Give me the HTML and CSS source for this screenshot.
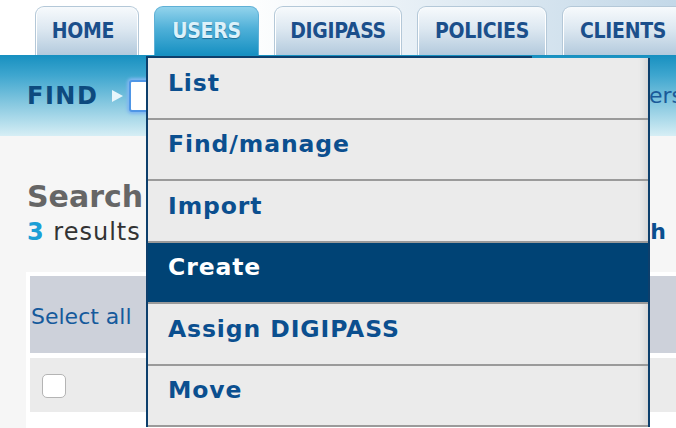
FILE: index.html
```html
<!DOCTYPE html>
<html>
<head>
<meta charset="utf-8">
<link rel="stylesheet" href="styles.css">
</head>
<body>
<div class="page">
  <nav class="tabs">
    <a class="tab tab-home">HOME</a>
    <a class="tab tab-users active">USERS</a>
    <a class="tab tab-digipass">DIGIPASS</a>
    <a class="tab tab-policies">POLICIES</a>
    <a class="tab tab-clients">CLIENTS</a>
  </nav>
  <div class="findbar">
    <span class="find-label">FIND</span>
    <span class="find-arrow"></span>
    <span class="find-input"></span>
    <span class="find-scope">Users</span>
  </div>
  <main class="content">
    <div class="heading-row">
      <div class="heading">
        <h1 class="title">Search results</h1>
        <p class="count"><b>3</b> results found</p>
      </div>
      <a class="refine">New search</a>
    </div>
    <div class="grid">
      <div class="grid-head"><span class="select-all">Select all</span></div>
      <div class="grid-row shaded"><span class="cb"></span></div>
      <div class="grid-row"><span class="cb"></span></div>
    </div>
  </main>
  <ul class="menu">
    <li class="menu-item">List</li>
    <li class="menu-item">Find/manage</li>
    <li class="menu-item">Import</li>
    <li class="menu-item selected">Create</li>
    <li class="menu-item">Assign DIGIPASS</li>
    <li class="menu-item">Move</li>
  </ul>
</div>
</body>
</html>
```
FILE: styles.css
```css
html, body {
  margin: 0;
  padding: 0;
  background: #f6f6f6;
}
body {
  width: 676px;
  height: 428px;
  overflow: hidden;
  font-family: "DejaVu Sans", Verdana, sans-serif;
}
.page {
  position: relative;
  width: 676px;
  height: 428px;
  overflow: hidden;
}

/* Tabs */
.tabs {
  display: flex;
  gap: 15px;
  height: 55px;
  box-sizing: border-box;
  padding: 6px 0 0 35px;
  background: linear-gradient(to right, #ffffff 0%, #ffffff 35%, #c3d8e8 100%);
}
.tab {
  flex: none;
  height: 49px;
  box-sizing: border-box;
  display: flex;
  align-items: center;
  justify-content: center;
  border: 1px solid #b4c8d8;
  border-bottom: none;
  border-radius: 9px 9px 0 0;
  background: linear-gradient(to bottom, #f7fafc 0%, #dde8f1 45%, #b3cadd 100%);
  color: #1b4f8b;
  font-family: "DejaVu Sans Condensed", "DejaVu Sans", sans-serif;
  font-stretch: condensed;
  font-weight: bold;
  font-size: 21px;
  letter-spacing: -0.3px;
  box-shadow: inset 1px 0 0 #ffffff, inset -1px 0 0 #ffffff;
}
.tab-home { width: 104px; padding-right: 8px; }
.tab-users { width: 105px; }
.tab-digipass { width: 128px; }
.tab-policies { width: 130px; }
.tab-clients { width: 130px; justify-content: flex-start; padding-left: 17px; }
.tab.active {
  border-color: #5fb0d6;
  background: linear-gradient(to bottom, #92d3ec 0%, #4fb0d8 45%, #1690c2 100%);
  color: #dcf1fa;
  text-shadow: 0 1px 1px rgba(0, 50, 90, 0.5);
  box-shadow: none;
}

/* Find bar */
.findbar {
  height: 81px;
  display: flex;
  align-items: center;
  padding: 0 0 0 27px;
  background: linear-gradient(to bottom, #1790c0 0%, #3ea6cf 25%, #86c8e0 60%, #d6eef5 100%);
  white-space: nowrap;
}
.find-label {
  font-weight: bold;
  font-size: 24px;
  letter-spacing: 1.5px;
  color: #0d4a7e;
}
.find-arrow {
  width: 0;
  height: 0;
  margin-left: 14px;
  border-top: 6px solid transparent;
  border-bottom: 6px solid transparent;
  border-left: 11px solid #e8f6fb;
}
.find-input {
  width: 460px;
  height: 28px;
  margin-left: 6px;
  background: #ffffff;
  border: 2px solid #4f96e6;
  border-radius: 3px;
  box-shadow: 0 0 3px 2px #7fb6f0;
  flex: none;
}
.find-scope {
  margin-left: 28px;
  font-size: 22px;
  color: #1a5a99;
}

/* Content */
.content {
  padding: 44px 0 0 0;
}
.heading-row {
  display: flex;
  justify-content: space-between;
  align-items: flex-end;
  padding: 0 10px 0 27px;
}
.title {
  margin: 0;
  font-size: 30px;
  line-height: 34px;
  font-weight: bold;
  color: #666666;
}
.count {
  margin: 4px 0 0 0;
  font-size: 24px;
  line-height: 28px;
  letter-spacing: 1px;
  color: #333333;
  white-space: nowrap;
}
.count b {
  color: #1b9fd6;
}
.refine {
  font-size: 22px;
  font-weight: bold;
  line-height: 28px;
  color: #0b4f8f;
}
.grid {
  margin: 26px 0 0 26px;
  padding: 4px 0 0 4px;
  background: #ffffff;
}
.grid-head {
  height: 77px;
  display: flex;
  align-items: center;
  padding-left: 1px;
  background: #cdd1da;
}
.select-all {
  font-size: 22px;
  color: #155a9c;
  padding-top: 3px;
}
.grid-row {
  height: 54px;
  display: flex;
  align-items: center;
  padding-left: 12px;
}
.grid-row.shaded {
  margin-top: 5px;
  background: #ebebeb;
}
.cb {
  width: 22px;
  height: 22px;
  border: 1px solid #b4b4b4;
  border-radius: 5px;
  background: #ffffff;
  margin-top: 1px;
}

/* Dropdown menu */
.menu {
  position: absolute;
  left: 146px;
  top: 58px;
  width: 500px;
  margin: 0;
  padding: 0;
  list-style: none;
  border-left: 2px solid #0d3f6c;
  border-right: 2px solid #0d3f6c;
  background: #ebebeb;
}
.menu::before {
  content: "";
  position: absolute;
  left: -2px;
  top: -2px;
  width: 386px;
  height: 2px;
  background: #0d3f6c;
}
.menu-item {
  height: 61.5px;
  box-sizing: border-box;
  display: flex;
  align-items: center;
  padding: 0 0 10px 20px;
  border-bottom: 2px solid #9a9a9a;
  font-weight: bold;
  font-size: 23.5px;
  letter-spacing: 0.9px;
  color: #0b4f8f;
  background: #ebebeb;
  box-shadow: inset -10px 0 8px -8px rgba(0, 0, 0, 0.12);
}
.menu-item.selected {
  background: #004375;
  color: #ffffff;
  box-shadow: none;
}
```
